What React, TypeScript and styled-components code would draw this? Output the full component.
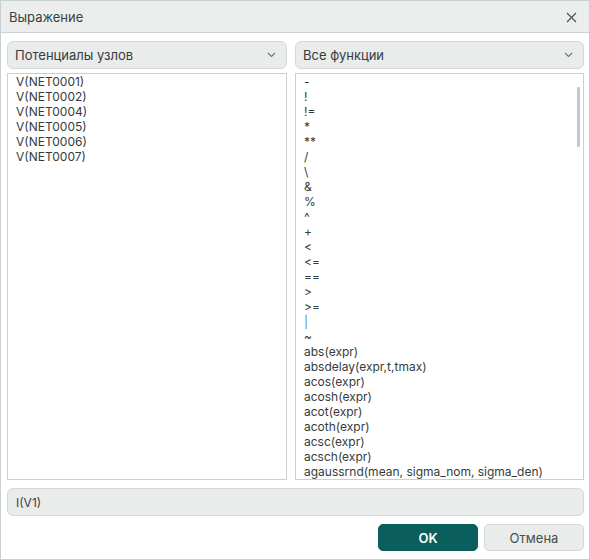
import React from 'react';
import styled, { createGlobalStyle } from 'styled-components';

const nodes = ['V(NET0001)', 'V(NET0002)', 'V(NET0004)', 'V(NET0005)', 'V(NET0006)', 'V(NET0007)'];

const functions = [
  '-', '!', '!=', '*', '**', '/', '\\', '&', '%', '^', '+', '<', '<=', '==', '>', '>=', '|', '~',
  'abs(expr)', 'absdelay(expr,t,tmax)', 'acos(expr)', 'acosh(expr)', 'acot(expr)', 'acoth(expr)',
  'acsc(expr)', 'acsch(expr)', 'agaussrnd(mean, sigma_nom, sigma_den)',
];

const Chevron = () => (
  <svg width="9" height="6" viewBox="0 0 9 6" fill="none">
    <path d="M1 1l3.5 3.5L8 1" stroke="#6b7373" strokeWidth="1.1" />
  </svg>
);

const CloseIcon = () => (
  <svg width="11" height="11" viewBox="0 0 11 11" fill="none">
    <path d="M1 1l9 9M10 1l-9 9" stroke="#4a5252" strokeWidth="1.2" />
  </svg>
);

const App: React.FunctionComponent = () => (
  <>
    <GlobalStyle />
    <Dialog>
      <TitleBar>
        <Title>Выражение</Title>
        <CloseButton>
          <CloseIcon />
        </CloseButton>
      </TitleBar>
      <Body>
        <Columns>
          <Combo>
            <ComboLabel>Потенциалы узлов</ComboLabel>
            <Chevron />
          </Combo>
          <Combo>
            <ComboLabel>Все функции</ComboLabel>
            <Chevron />
          </Combo>
          <List>
            {nodes.map(item => (
              <ListItem key={item}>{item}</ListItem>
            ))}
          </List>
          <List>
            {functions.map(item => (
              <ListItem key={item} accent={item === '|'}>
                {item}
              </ListItem>
            ))}
            <ScrollThumb />
          </List>
        </Columns>
        <ExpressionField>I(V1)</ExpressionField>
        <Footer>
          <PrimaryButton>OK</PrimaryButton>
          <SecondaryButton>Отмена</SecondaryButton>
        </Footer>
      </Body>
    </Dialog>
  </>
);

export default App;

const GlobalStyle = createGlobalStyle`
  body {
    margin: 0;
    background: #ffffff;
    font-family: Inter, "Noto Sans", sans-serif;
  }
`;

const Dialog = styled.div`
  width: 590px;
  height: 560px;
  box-sizing: border-box;
  border: 1px solid #c9d1d0;
  background: #ffffff;
  display: flex;
  flex-direction: column;
`;

const TitleBar = styled.div`
  height: 31px;
  display: flex;
  align-items: center;
  justify-content: space-between;
  padding: 0 12px 0 8px;
  background: #eceeed;
  border-bottom: 1px solid #cdd4d3;
`;

const Title = styled.span`
  font-size: 13px;
  color: #3a3f3f;
`;

const CloseButton = styled.div`
  display: flex;
  align-items: center;
  padding-top: 1px;
`;

const Body = styled.div`
  display: flex;
  flex-direction: column;
  padding: 8px 5px 0 6px;
`;

const Columns = styled.div`
  display: grid;
  grid-template-columns: 280px 289px;
  grid-template-rows: 28px 407px;
  column-gap: 8px;
  row-gap: 4px;
`;

const Combo = styled.div`
  display: flex;
  align-items: center;
  justify-content: space-between;
  box-sizing: border-box;
  padding: 0 10px 0 7px;
  background: #eaeceb;
  border: 1px solid #d3d9d8;
  border-radius: 6px;
`;

const ComboLabel = styled.span`
  font-size: 13px;
  color: #363b3b;
`;

const List = styled.div`
  position: relative;
  box-sizing: border-box;
  border: 1px solid #c9d1d0;
  padding: 0 8px;
  overflow: hidden;
`;

const ListItem = styled.div<{ accent?: boolean }>`
  font-size: 12px;
  line-height: 15px;
  height: 15px;
  color: ${attr => (attr.accent ? '#4f86d0' : '#363b3b')};
  white-space: nowrap;
`;

const ScrollThumb = styled.div`
  position: absolute;
  top: 13px;
  right: 3px;
  width: 3px;
  height: 60px;
  border-radius: 1px;
  background: #c3cbca;
`;

const ExpressionField = styled.div`
  margin-top: 8px;
  height: 28px;
  box-sizing: border-box;
  display: flex;
  align-items: center;
  padding: 0 8px;
  background: #eaeceb;
  border: 1px solid #d3d9d8;
  border-radius: 6px;
  font-size: 12px;
  color: #3a3f3f;
`;

const Footer = styled.div`
  display: flex;
  justify-content: flex-end;
  gap: 6px;
  margin-top: 8px;
`;

const PrimaryButton = styled.button`
  width: 100px;
  height: 27px;
  border: 1px solid #0a5e5d;
  background: #0a5e5d;
  color: #ffffff;
  border-radius: 5px;
  font-family: Inter, sans-serif;
  font-size: 13px;
  font-weight: 600;
  padding: 0;
  cursor: pointer;
`;

const SecondaryButton = styled.button`
  width: 100px;
  height: 27px;
  border: 1px solid #d3d9d8;
  background: #eaeceb;
  color: #445050;
  border-radius: 5px;
  font-family: Inter, sans-serif;
  font-size: 13px;
  padding: 0;
  cursor: pointer;
`;
